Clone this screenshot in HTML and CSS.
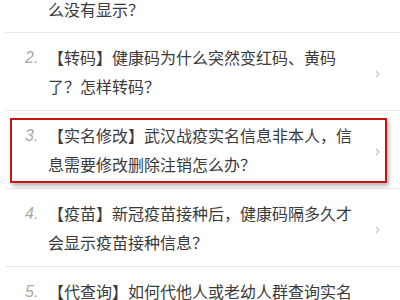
FILE: index.html
```html
<!DOCTYPE html>
<html lang="zh-CN">
<head>
<meta charset="utf-8">
<link rel="stylesheet" href="styles.css">
</head>
<body>
<ul class="list">
  <li class="item item-partial">
    <span class="num"></span>
    <div class="text">么没有显示？</div>
  </li>
  <li class="item">
    <span class="num">2.</span>
    <div class="text">【转码】健康码为什么突然变红码、黄码了？怎样转码？</div>
    <svg class="arrow" width="5" height="8" viewBox="0 0 5 8"><polyline points="1,1 4,4 1,7" fill="none" stroke="#c4c4c4" stroke-width="1.2"/></svg>
  </li>
  <li class="item item-marked">
    <span class="num">3.</span>
    <div class="text">【实名修改】武汉战疫实名信息非本人，信息需要修改删除注销怎么办？</div>
    <svg class="arrow" width="5" height="8" viewBox="0 0 5 8"><polyline points="1,1 4,4 1,7" fill="none" stroke="#c4c4c4" stroke-width="1.2"/></svg>
  </li>
  <li class="item">
    <span class="num">4.</span>
    <div class="text">【疫苗】新冠疫苗接种后，健康码隔多久才会显示疫苗接种信息？</div>
    <svg class="arrow" width="5" height="8" viewBox="0 0 5 8"><polyline points="1,1 4,4 1,7" fill="none" stroke="#c4c4c4" stroke-width="1.2"/></svg>
  </li>
  <li class="item">
    <span class="num">5.</span>
    <div class="text">【代查询】如何代他人或老幼人群查询实名信息？</div>
    <svg class="arrow" width="5" height="8" viewBox="0 0 5 8"><polyline points="1,1 4,4 1,7" fill="none" stroke="#c4c4c4" stroke-width="1.2"/></svg>
  </li>
</ul>
</body>
</html>
```
FILE: styles.css
```css
html, body {
  margin: 0;
  background: #ffffff;
  overflow: hidden;
}
body {
  font-family: "Noto Sans CJK SC", "Noto Sans", sans-serif;
}
.list {
  list-style: none;
  margin: -5px 0 0 5px;
  padding: 0;
}
.item {
  display: flex;
  align-items: flex-start;
  padding: 10px 0 9px 0;
  border-bottom: 1px solid #e8e8e8;
}
.item-partial {
  padding-top: 0;
  padding-bottom: 8px;
}
.num {
  flex: none;
  width: 23px;
  margin-left: 20px;
  font-family: "Liberation Sans", Arial, sans-serif;
  font-style: italic;
  font-size: 16px;
  line-height: 29px;
  color: #a8a8a8;
}
.text {
  flex: none;
  width: 308px;
  font-size: 16px;
  line-height: 29px;
  color: #3a3a3a;
}
.arrow {
  flex: none;
  align-self: center;
  margin-left: auto;
  margin-right: 20px;
  margin-top: 4px;
}
.item-marked {
  position: relative;
}
.item-marked::after {
  content: "";
  position: absolute;
  top: 7px;
  bottom: 5px;
  left: 5px;
  right: 13px;
  border: 2px solid #c81414;
  box-shadow: 2px 3px 4px rgba(0, 0, 0, 0.28);
}
```
